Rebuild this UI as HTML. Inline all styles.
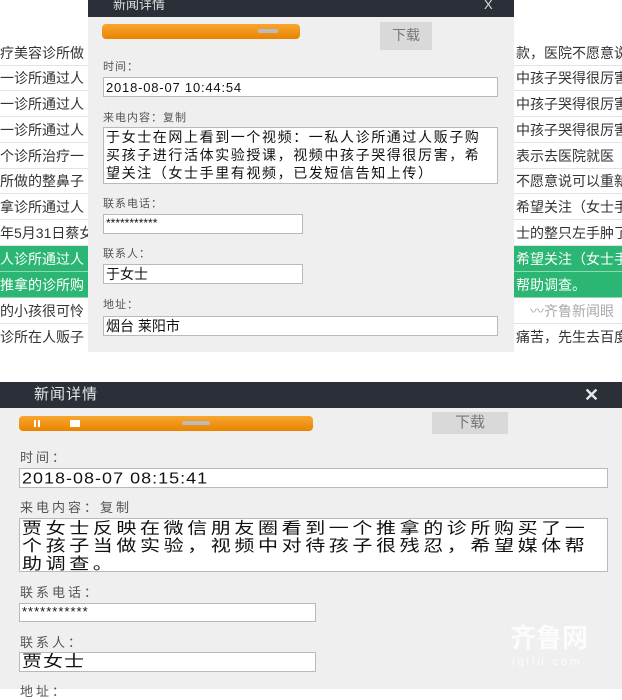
<!DOCTYPE html>
<html><head><meta charset="utf-8"><style>
*{margin:0;padding:0;box-sizing:border-box}
body{width:622px;height:689px;background:#fff;position:relative;overflow:hidden;font-family:"Liberation Sans","Noto Sans CJK SC",sans-serif;color:#222}
.a{position:absolute}
.row{position:absolute;height:26px;line-height:26px;font-size:14px;white-space:nowrap;overflow:hidden;border-bottom:1px solid #e3e3e3;color:#333}
.g{background:#2bb673;color:#fff;border-bottom:1px solid #8fd8b3}
.lbl{position:absolute;font-size:11px;color:#555;letter-spacing:1px}
.inp{position:absolute;background:#fff;border:1px solid #b9b9b9;font-size:13px;padding-left:2px;color:#111;overflow:hidden;white-space:nowrap}
.bar{position:absolute;background:linear-gradient(#f8a630,#ea8300);border-radius:4px}
.btn{position:absolute;background:#d9d9d9;color:#777;text-align:center}
.sq{display:block;transform:scaleY(.8);transform-origin:0 0}
</style></head><body>
<div class="row" style="left:0;top:40px;width:622px">疗美容诊所做<span class="a" style="left:516px">款，医院不愿意说</span></div>
<div class="row" style="left:0;top:65px;width:622px">一诊所通过人<span class="a" style="left:516px">中孩子哭得很厉害</span></div>
<div class="row" style="left:0;top:91px;width:622px">一诊所通过人<span class="a" style="left:516px">中孩子哭得很厉害</span></div>
<div class="row" style="left:0;top:117px;width:622px">一诊所通过人<span class="a" style="left:516px">中孩子哭得很厉害</span></div>
<div class="row" style="left:0;top:143px;width:622px">个诊所治疗一<span class="a" style="left:516px">表示去医院就医</span></div>
<div class="row" style="left:0;top:168px;width:622px">所做的整鼻子<span class="a" style="left:516px">不愿意说可以重新</span></div>
<div class="row" style="left:0;top:194px;width:622px">拿诊所通过人<span class="a" style="left:516px">希望关注（女士手</span></div>
<div class="row" style="left:0;top:220px;width:622px">年5月31日蔡女<span class="a" style="left:516px">士的整只左手肿了</span></div>
<div class="row g" style="left:0;top:246px;width:622px">人诊所通过人<span class="a" style="left:516px">希望关注（女士手</span></div>
<div class="row g" style="left:0;top:272px;width:622px">推拿的诊所购<span class="a" style="left:516px">帮助调查。</span></div>
<div class="row" style="left:0;top:298px;width:622px">的小孩很可怜<span class="a" style="left:530px;color:#aaa">〰齐鲁新闻眼</span></div>
<div class="row" style="left:0;top:324px;width:622px;border:none">诊所在人贩子<span class="a" style="left:516px">痛苦，先生去百度</span></div>

<div class="a" style="left:88px;top:0;width:426px;height:352px;background:#efefef"></div>
<div class="a" style="left:88px;top:0;width:426px;height:17px;background:#2b3038;color:#ddd;font-size:13px;line-height:10px"><span style="margin-left:25px">新闻详情</span><span class="a" style="left:396px;top:0">X</span></div>
<div class="bar" style="left:102px;top:24px;width:198px;height:15px"></div>
<div class="a" style="left:258px;top:29px;width:20px;height:4px;background:#bbb;border-radius:2px"></div>
<div class="btn" style="left:380px;top:22px;width:52px;height:28px;line-height:26px;font-size:14px">下载</div>
<div class="lbl" style="left:103px;top:58px">时间：</div>
<div class="inp" style="left:103px;top:77px;width:395px;height:20px;font-size:13px;line-height:19px;letter-spacing:.8px">2018-08-07 10:44:54</div>
<div class="lbl" style="left:103px;top:109px">来电内容：复制</div>
<div class="inp" style="left:103px;top:127px;width:395px;height:57px;font-size:14px;line-height:18px;letter-spacing:1.6px">于女士在网上看到一个视频：一私人诊所通过人贩子购<br>买孩子进行活体实验授课，视频中孩子哭得很厉害，希<br>望关注（女士手里有视频，已发短信告知上传）</div>
<div class="lbl" style="left:103px;top:195px">联系电话：</div>
<div class="inp" style="left:103px;top:214px;width:200px;height:20px;line-height:16px;font-size:12px">***********</div>
<div class="lbl" style="left:103px;top:245px">联系人：</div>
<div class="inp" style="left:103px;top:264px;width:200px;height:20px;line-height:19px;font-size:14px">于女士</div>
<div class="lbl" style="left:103px;top:296px">地址：</div>
<div class="inp" style="left:103px;top:316px;width:395px;height:20px;line-height:19px;font-size:14px">烟台 莱阳市</div>

<div class="a" style="left:0;top:382px;width:622px;height:307px;background:#efefef"></div>
<div class="a" style="left:0;top:382px;width:622px;height:26px;background:#2b3038;color:#e6e6e6;font-size:15px;line-height:26px"><span style="margin-left:34px;letter-spacing:1px">新闻详情</span><span class="a" style="left:584px;top:0;font-size:18px;font-weight:bold">✕</span></div>
<div class="bar" style="left:19px;top:416px;width:294px;height:15px"></div>
<div class="a" style="left:182px;top:421px;width:28px;height:4px;background:#bbb;border-radius:2px"></div>
<div class="a" style="left:34px;top:420px;width:6px;height:7px;border-left:2px solid #fff;border-right:2px solid #fff"></div>
<div class="a" style="left:70px;top:420px;width:10px;height:7px;background:#fff"></div>
<div class="btn" style="left:432px;top:412px;width:76px;height:22px;line-height:22px;font-size:15px">下载</div>
<div class="lbl" style="left:20px;top:447px;font-size:13px;letter-spacing:3px">时间：</div>
<div class="inp" style="left:19px;top:468px;width:589px;height:20px;font-size:18px;letter-spacing:1px"><span class="sq" style="line-height:22px;transform:scaleY(.85)">2018-08-07 08:15:41</span></div>
<div class="lbl" style="left:20px;top:497px;font-size:13px;letter-spacing:3px">来电内容：复制</div>
<div class="inp" style="left:19px;top:518px;width:589px;height:54px;font-size:20px;letter-spacing:3.6px"><span class="sq" style="line-height:22px;margin-top:1px">贾女士反映在微信朋友圈看到一个推拿的诊所购买了一<br>个孩子当做实验，视频中对待孩子很残忍，希望媒体帮<br>助调查。</span></div>
<div class="lbl" style="left:20px;top:582px;font-size:13px;letter-spacing:3px">联系电话：</div>
<div class="inp" style="left:19px;top:603px;width:297px;height:19px;line-height:16px;font-size:13px;letter-spacing:1px">***********</div>
<div class="lbl" style="left:20px;top:632px;font-size:13px;letter-spacing:3px">联系人：</div>
<div class="inp" style="left:19px;top:652px;width:297px;height:20px;font-size:20px;letter-spacing:1px"><span class="sq" style="line-height:23px">贾女士</span></div>
<div class="lbl" style="left:20px;top:681px;font-size:13px;letter-spacing:3px">地址：</div>
<div class="a" style="left:510px;top:618px;color:#fff;opacity:.85;font-size:26px;font-weight:bold">齐鲁网</div>
<div class="a" style="left:512px;top:656px;color:#fff;opacity:.8;font-size:11px;letter-spacing:3px">iqilu.com</div>
</body></html>
